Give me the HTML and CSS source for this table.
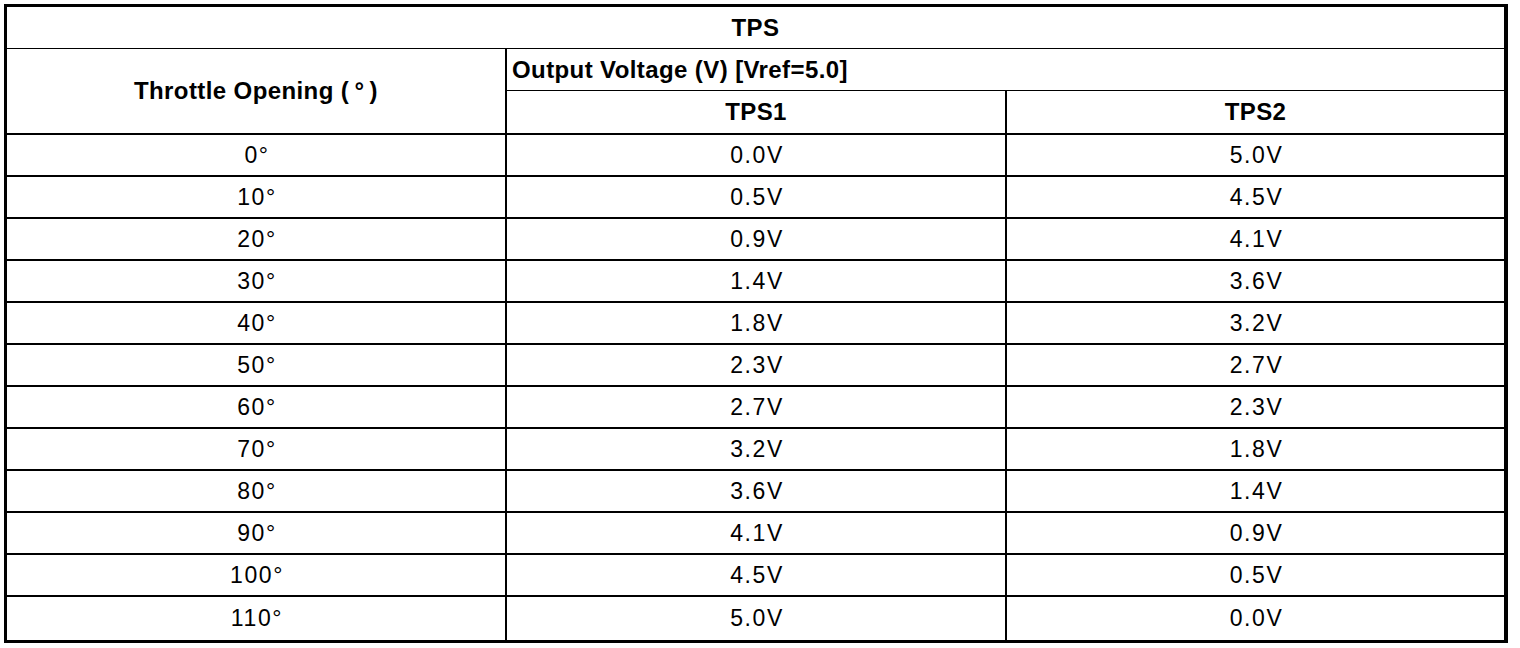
FILE: index.html
```html
<!DOCTYPE html>
<html lang="en">
<head>
<meta charset="utf-8">
<title>TPS</title>
<link rel="stylesheet" href="styles.css">
</head>
<body>
<div class="tps">
  <div class="cell head title">TPS</div>
  <div class="cell head throttle br b2">Throttle Opening (&#8201;°&#8201;)</div>
  <div class="cell head output">Output Voltage (V) [Vref=5.0]</div>
  <div class="cell head br b2">TPS1</div>
  <div class="cell head b2">TPS2</div>

  <div class="cell br b2">0°</div><div class="cell br b2">0.0V</div><div class="cell b2">5.0V</div>
  <div class="cell br b2">10°</div><div class="cell br b2">0.5V</div><div class="cell b2">4.5V</div>
  <div class="cell br b2">20°</div><div class="cell br b2">0.9V</div><div class="cell b2">4.1V</div>
  <div class="cell br b2">30°</div><div class="cell br b2">1.4V</div><div class="cell b2">3.6V</div>
  <div class="cell br b2">40°</div><div class="cell br b2">1.8V</div><div class="cell b2">3.2V</div>
  <div class="cell br b2">50°</div><div class="cell br b2">2.3V</div><div class="cell b2">2.7V</div>
  <div class="cell br b2">60°</div><div class="cell br b2">2.7V</div><div class="cell b2">2.3V</div>
  <div class="cell br b2">70°</div><div class="cell br b2">3.2V</div><div class="cell b2">1.8V</div>
  <div class="cell br b2">80°</div><div class="cell br b2">3.6V</div><div class="cell b2">1.4V</div>
  <div class="cell br b2">90°</div><div class="cell br b2">4.1V</div><div class="cell b2">0.9V</div>
  <div class="cell br b2">100°</div><div class="cell br b2">4.5V</div><div class="cell b2">0.5V</div>
  <div class="cell br">110°</div><div class="cell br">5.0V</div><div class="cell">0.0V</div>
</div>
</body>
</html>
```

FILE: styles.css
```css
html, body {
  margin: 0;
  padding: 0;
  background: #fff;
}

body {
  padding: 4px;
  font-family: "Liberation Sans", Arial, sans-serif;
  color: #000;
}

.tps {
  display: grid;
  box-sizing: border-box;
  width: 1504px;
  grid-template-columns: 500px 500px 497px;
  grid-template-rows: 42px 42px 44px repeat(11, 42px) 43px;
  border: 3px solid #000;
  border-right-width: 4px;
}

.cell {
  box-sizing: border-box;
  display: flex;
  align-items: center;
  justify-content: center;
  padding-left: 2px;
  font-size: 23px;
  letter-spacing: 1.6px;
  white-space: nowrap;
}

.head {
  padding-left: 0;
  font-weight: bold;
  font-size: 24px;
  letter-spacing: 0.4px;
}

.br { border-right: 2px solid #000; }
.b2 { border-bottom: 2px solid #000; }

.title {
  grid-column: 1 / 4;
  border-bottom: 1px solid #000;
}

.throttle {
  grid-row: 2 / 4;
}

.output {
  grid-column: 2 / 4;
  justify-content: flex-start;
  padding-left: 5px;
  border-bottom: 1px solid #000;
}
```
